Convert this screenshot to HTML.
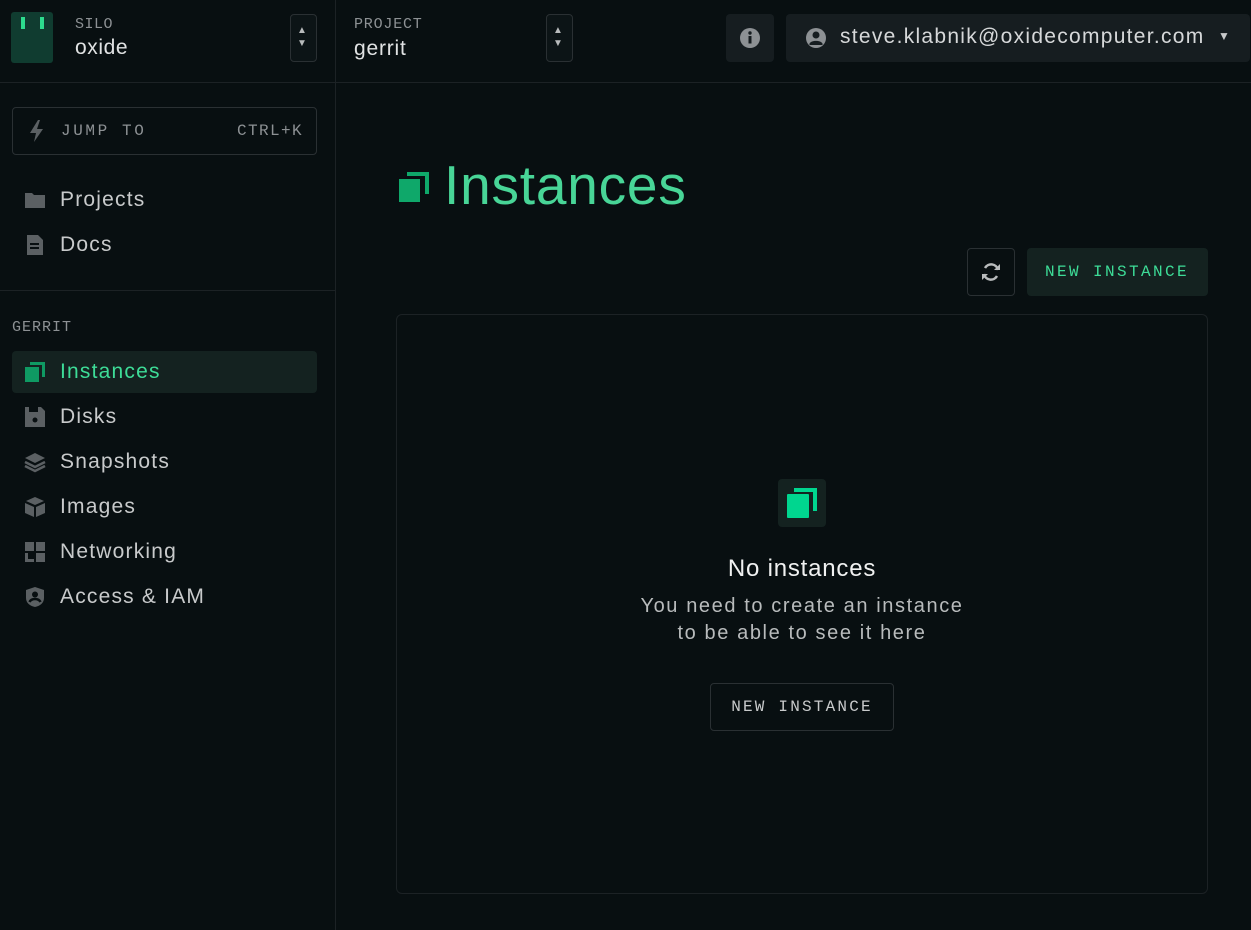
<!DOCTYPE html>
<html><head><meta charset="utf-8"><style>
*{box-sizing:border-box;margin:0;padding:0}
body{width:1251px;height:930px;background:#080f11;font-family:"Liberation Sans",sans-serif;color:#e7e7e8;position:relative;overflow:hidden}
.a{position:absolute}
.mono{font-family:"Liberation Mono",monospace}
.hl{left:0;right:0;top:82px;height:1px;background:#1c2225}
.vl{left:335px;top:0;bottom:0;width:1px;background:#1c2225}
.btn{border:1px solid #2a3033;border-radius:4px}
.nav{left:12px;width:305px;height:42px;font-size:21px;color:#c8cacb;display:flex;align-items:center;padding-left:12px;letter-spacing:1.2px}
.nav svg{margin-right:14px}
</style></head><body>
<div class="a hl"></div><div class="a vl"></div>
<div class="a" style="left:0;top:290px;width:335px;height:1px;background:#1c2225"></div>

<div class="a" style="left:11px;top:12px;width:42px;height:51px;background:#103c30;border-radius:3px"></div>
<div class="a" style="left:21px;top:17px;width:4px;height:12px;background:#2ddc8e"></div>
<div class="a" style="left:40px;top:17px;width:4px;height:12px;background:#2ddc8e"></div>
<div class="a mono" style="left:75px;top:16px;font-size:15px;color:#8d9194;letter-spacing:.5px">SILO</div>
<div class="a" style="left:75px;top:36px;font-size:21px;color:#e0e2e3;letter-spacing:.6px">oxide</div>
<div class="a btn" style="left:290px;top:14px;width:27px;height:48px;background:#0c1416"></div>
<div class="a" style="left:297px;top:24px;font-size:10px;color:#b8bbbc;line-height:13px">▲<br>▼</div>

<div class="a mono" style="left:354px;top:16px;font-size:15px;color:#8d9194;letter-spacing:.8px">PROJECT</div>
<div class="a" style="left:354px;top:37px;font-size:21px;color:#e0e2e3;letter-spacing:.8px">gerrit</div>
<div class="a btn" style="left:546px;top:14px;width:27px;height:48px;background:#0c1416"></div>
<div class="a" style="left:553px;top:24px;font-size:10px;color:#b8bbbc;line-height:13px">▲<br>▼</div>

<div class="a" style="left:726px;top:14px;width:48px;height:48px;background:#161d20;border-radius:4px"></div>
<svg class="a" style="left:739px;top:27px" width="22" height="22" viewBox="0 0 22 22"><circle cx="11" cy="11" r="10" fill="#8d9194"/><rect x="9.5" y="9" width="3" height="7.5" fill="#161d20"/><circle cx="11" cy="6" r="1.7" fill="#161d20"/></svg>
<div class="a" style="left:786px;top:14px;width:464px;height:48px;background:#161d20;border-radius:4px"></div>
<svg class="a" style="left:805px;top:27px" width="22" height="22" viewBox="0 0 22 22"><circle cx="11" cy="11" r="10" fill="#8d9194"/><circle cx="11" cy="8" r="3.5" fill="#161d20"/><path d="M4.5 16.5c2-3.5 11-3.5 13 0v1.5h-13z" fill="#161d20"/></svg>
<div class="a" style="left:840px;top:25px;font-size:21px;color:#d6d8d9;letter-spacing:1.28px">steve.klabnik@oxidecomputer.com</div>
<div class="a" style="left:1218px;top:29px;font-size:12px;color:#c8cacb">▼</div>

<div class="a btn" style="left:12px;top:107px;width:305px;height:48px"></div>
<svg class="a" style="left:27px;top:119px" width="20" height="24" viewBox="0 0 20 24"><path d="M11 1L3 14h6l-2 9 9-13h-6l3-9z" fill="#5b6063"/></svg>
<div class="a mono" style="left:61px;top:122px;font-size:16px;color:#8d9194;letter-spacing:2.6px">JUMP TO</div>
<div class="a mono" style="left:237px;top:122px;font-size:16px;color:#8d9194;letter-spacing:1.4px">CTRL+K</div>

<div class="a nav" style="top:179px"><svg width="22" height="20" viewBox="0 0 22 20"><path d="M1 3h7l2 2h11v13H1z" fill="#5b6063"/></svg>Projects</div>
<div class="a nav" style="top:224px"><svg width="22" height="22" viewBox="0 0 22 22"><path d="M3 1h11l5 5v15H3z" fill="#5b6063"/><rect x="6" y="9" width="9" height="2" fill="#080f11"/><rect x="6" y="13" width="9" height="2" fill="#080f11"/></svg>Docs</div>

<div class="a mono" style="left:12px;top:319px;font-size:15px;color:#8d9194;letter-spacing:1px">GERRIT</div>
<div class="a nav" style="top:351px;background:#142220;border-radius:4px;color:#3ddc97"><svg width="22" height="22" viewBox="0 0 22 22"><rect x="1" y="6" width="14" height="15" fill="#0f9a63"/><path d="M6 1h15v15h-3V4H6z" fill="#0f9a63"/></svg>Instances</div>
<div class="a nav" style="top:396px"><svg width="22" height="22" viewBox="0 0 22 22"><path d="M1 1h16l4 4v16H1z" fill="#5b6063"/><rect x="5" y="1" width="9" height="5" fill="#080f11"/><circle cx="11" cy="14" r="2.5" fill="#080f11"/></svg>Disks</div>
<div class="a nav" style="top:441px"><svg width="22" height="22" viewBox="0 0 22 22"><path d="M11 2l10 5-10 5L1 7z" fill="#5b6063"/><path d="M1 11l10 5 10-5M1 15l10 5 10-5" stroke="#5b6063" stroke-width="2.5" fill="none"/></svg>Snapshots</div>
<div class="a nav" style="top:486px"><svg width="22" height="22" viewBox="0 0 22 22"><path d="M11 1l9 4-9 4-9-4z" fill="#5b6063"/><path d="M1 7l9 4v10l-9-4zM21 7l-9 4v10l9-4z" fill="#5b6063"/></svg>Images</div>
<div class="a nav" style="top:531px"><svg width="22" height="22" viewBox="0 0 22 22"><rect x="1" y="1" width="9" height="9" fill="#5b6063"/><rect x="12" y="1" width="9" height="9" fill="#5b6063"/><rect x="12" y="12" width="9" height="9" fill="#5b6063"/><path d="M1 12h3v6h6v3H1z" fill="#5b6063"/></svg>Networking</div>
<div class="a nav" style="top:576px"><svg width="22" height="22" viewBox="0 0 22 22"><path d="M11 1l9 3v8c0 5-4 8-9 9-5-1-9-4-9-9V4z" fill="#5b6063"/><circle cx="11" cy="8.5" r="3" fill="#080f11"/><path d="M5.5 16c2-4 9-4 11 0" stroke="#080f11" stroke-width="2.5" fill="none"/></svg>Access &amp; IAM</div>

<svg class="a" style="left:399px;top:172px" width="32" height="32" viewBox="0 0 32 32"><rect x="0" y="7" width="21" height="23" fill="#0fa86a"/><path d="M8 0h22v22h-4V4H8z" fill="#0fa86a"/></svg>
<div class="a" style="left:444px;top:153px;font-size:55px;color:#48d597;letter-spacing:.8px">Instances</div>

<div class="a btn" style="left:967px;top:248px;width:48px;height:48px"></div>
<svg class="a" style="left:979px;top:260px" width="24" height="24" viewBox="0 0 24 24"><path d="M19 10a7 7 0 0 0-13-2" stroke="#b8bbbc" stroke-width="2.5" fill="none"/><path d="M5 14a7 7 0 0 0 13 2" stroke="#b8bbbc" stroke-width="2.5" fill="none"/><path d="M15 10h6V4z" fill="#b8bbbc"/><path d="M9 14H3v6z" fill="#b8bbbc"/></svg>
<div class="a" style="left:1027px;top:248px;width:181px;height:48px;background:#142220;border-radius:4px"></div>
<div class="a mono" style="left:1045px;top:263px;font-size:16px;color:#3ddc97;letter-spacing:2.4px">NEW INSTANCE</div>

<div class="a" style="left:396px;top:314px;width:812px;height:580px;border:1px solid #1c2225;border-radius:6px"></div>
<div class="a" style="left:778px;top:479px;width:48px;height:48px;background:#142220;border-radius:4px"></div>
<svg class="a" style="left:787px;top:488px" width="30" height="30" viewBox="0 0 30 30"><rect x="0" y="6" width="22" height="24" rx="1" fill="#00d68f"/><path d="M7 0h23v23h-4V4H7z" fill="#00d68f"/></svg>
<div class="a" style="left:552px;top:555px;width:500px;text-align:center;font-size:24px;color:#f0f1f1;letter-spacing:.8px">No instances</div>
<div class="a" style="left:502px;top:593px;width:600px;text-align:center;font-size:20px;color:#b8bbbc;line-height:27px;letter-spacing:1.6px">You need to create an instance<br>to be able to see it here</div>
<div class="a btn" style="left:710px;top:683px;width:184px;height:48px"></div>
<div class="a mono" style="left:710px;top:698px;width:184px;text-align:center;font-size:16px;color:#c8cacb;letter-spacing:2.2px">NEW INSTANCE</div>
</body></html>
